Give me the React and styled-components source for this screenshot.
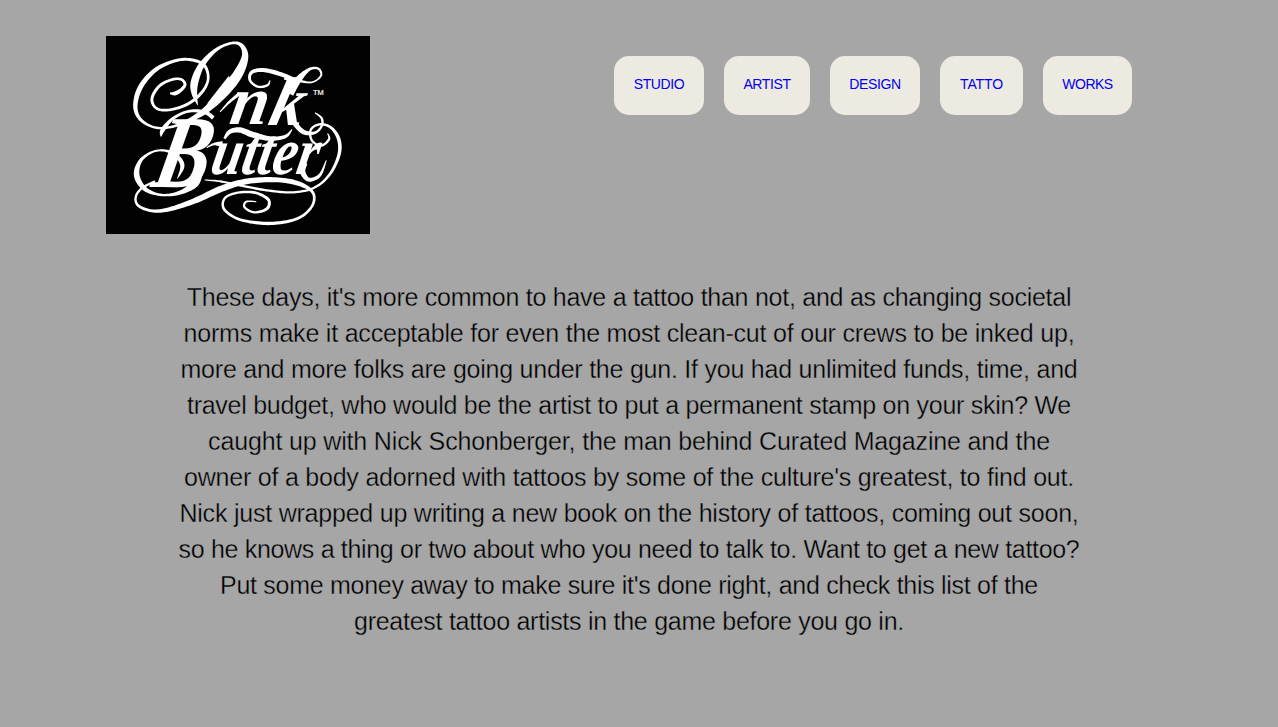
import React from "react";
import styled, { createGlobalStyle } from "styled-components";

const GlobalStyle = createGlobalStyle`
  html, body { margin: 0; padding: 0; background: #a6a6a6; }
  body { font-family: "Liberation Sans", Helvetica, Arial, sans-serif; color: #000; overflow: hidden; }
`;

const Page = styled.div`
  box-sizing: border-box;
  height: 727px;
  padding: 36px 146px 0 106px;
`;

const Header = styled.header`
  display: flex;
  justify-content: space-between;
  align-items: flex-start;
  height: 198px;
`;

const Logo = styled.svg`
  display: block;
  width: 264px;
  height: 198px;
  background: #020202;
`;

const Script = styled.text`
  font-family: "Liberation Serif", "Times New Roman", serif;
  font-style: italic;
  font-weight: 700;
`;

const Stem = styled.text`
  font-family: "Liberation Sans", Arial, sans-serif;
  font-weight: 700;
`;

const Mark = styled.text`
  font-family: "Liberation Sans", Arial, sans-serif;
  font-size: 22px;
  stroke: #fff;
  stroke-width: 0.6px;
`;

const Nav = styled.nav`
  display: flex;
  gap: 20px;
  padding-top: 20px;
`;

const NavLink = styled.a`
  box-sizing: border-box;
  width: ${(p) => p.$width}px;
  height: 59px;
  border-radius: 15px;
  background: #edeae1;
  color: #0000ee;
  font-size: 14px;
  line-height: 57px;
  letter-spacing: ${(p) => p.$track || 0}px;
  text-align: center;
  text-decoration: none;
  white-space: nowrap;
`;

const Intro = styled.p`
  width: 920px;
  margin: 45px 0 0 63px;
  font-size: 25px;
  line-height: 36px;
  text-align: center;
  -webkit-text-stroke: 0.35px #a6a6a6;
`;

const Line = styled.span`
  display: block;
  white-space: nowrap;
  letter-spacing: ${(p) => p.$track}px;
`;

const links = [
  ["STUDIO", 90, -0.4],
  ["ARTIST", 86, -0.4],
  ["DESIGN", 90, -0.4],
  ["TATTO", 83, -0.1],
  ["WORKS", 89, -0.5],
];

const lines = [
  ["These days, it's more common to have a tattoo than not, and as changing societal", -0.26],
  ["norms make it acceptable for even the most clean-cut of our crews to be inked up,", -0.205],
  ["more and more folks are going under the gun. If you had unlimited funds, time, and", -0.23],
  ["travel budget, who would be the artist to put a permanent stamp on your skin? We", -0.27],
  ["caught up with Nick Schonberger, the man behind Curated Magazine and the", -0.16],
  ["owner of a body adorned with tattoos by some of the culture's greatest, to find out.", -0.215],
  ["Nick just wrapped up writing a new book on the history of tattoos, coming out soon,", -0.217],
  ["so he knows a thing or two about who you need to talk to. Want to get a new tattoo?", -0.32],
  ["Put some money away to make sure it's done right, and check this list of the", -0.29],
  ["greatest tattoo artists in the game before you go in.", -0.27],
];

// Each flourish is a list of [x, y, pen width] along the middle of the stroke.
const flourishes = [
  [[210,190,5],[226,190,12],[244,179,10],[255,163,9],[243,148,8],[215,149,8],[178,168,9],[156,205,9],[168,234,8],[205,240,8],[260,224,9],[303,190,9],[324,150,8],[316,110,9],[286,92,9],[235,90,9],[170,117,12],[122,170,15],[106,230,13],[125,272,9],[175,294,7],[240,283,9],[310,246,18],[370,188,30],[414,132,29],[435,80,20],[425,47,12],[397,39,8],[350,58,10],[305,105,18],[284,155,23],[283,190,17],[293,225,2]],
  [[510,151,3],[502,166,7],[473,170,7],[450,151,8],[455,127,10],[490,120,12],[540,132,13],[590,150,9],[635,157,5],[663,137,6],[655,116,7],[628,118,9],[594,150,20],[570,192,22]],
  [[580,276,14],[610,306,14],[645,308,8],[665,288,7],[665,265,7],[645,248,3]],
  [[683,310,3],[687,328,7],[664,347,7],[636,332,7],[632,300,7],[658,283,7],[692,292,8],[716,327,11],[717,374,10],[690,432,8],[645,472,7],[580,487,7],[500,481,7],[420,466,7],[360,454,6],[314,450,3]],
  [[165,454,7],[125,475,7],[107,502,7],[116,528,8],[160,543,9],[215,536,13],[290,510,17],[360,478,19],[435,455,17],[520,449,15],[590,459,14],[636,484,9],[640,520,8],[610,556,8],[560,575,9],[490,580,10],[415,567,8],[372,537,8],[375,504,7],[414,488,7],[465,488,8],[505,509,9],[501,536,9],[463,547,7],[434,532,7],[439,515,6],[469,515,3]],
  [[183,320,3],[188,300,13],[218,266,9],[265,244,8],[313,246,11],[340,264,12]],
  [[306,430,4],[285,462,20],[240,488,12],[185,495,7],[135,477,13],[110,435,17],[124,389,10],[170,362,6],[220,370,9],[247,405,13],[232,446,2]],
  [[373,326,7],[390,305,13],[420,300,16],[461,315,18],[514,326,13],[557,319,10],[576,298,3]],
  [[618,400,9],[608,425,16],[626,449,12],[659,436,9],[679,391,3]],
  [[360,246,3],[386,218,7],[416,193,10]],
  [[320,353,3],[340,343,7],[368,340,14]],
];

// Turns a list of pen positions into the outline of a smooth ribbon.
function ribbon(points) {
  const at = (i) => points[Math.max(0, Math.min(points.length - 1, i))];
  const samples = [];
  for (let i = 0; i < points.length - 1; i++) {
    const [a, b, c, d] = [at(i - 1), at(i), at(i + 1), at(i + 2)];
    for (let s = 0; s < 10; s++) {
      const t = s / 10;
      samples.push([0, 1, 2].map((k) =>
        0.5 * (2 * b[k] + (c[k] - a[k]) * t + (2 * a[k] - 5 * b[k] + 4 * c[k] - d[k]) * t * t + (3 * b[k] - a[k] - 3 * c[k] + d[k]) * t * t * t)
      ));
    }
  }
  samples.push(points[points.length - 1]);
  const left = [];
  const right = [];
  samples.forEach(([x, y, w], i) => {
    const p = samples[Math.max(0, i - 1)];
    const n = samples[Math.min(samples.length - 1, i + 1)];
    const dx = n[0] - p[0];
    const dy = n[1] - p[1];
    const len = Math.hypot(dx, dy) || 1;
    const ox = (-dy / len) * w / 2;
    const oy = (dx / len) * w / 2;
    left.push(`${(x + ox).toFixed(1)},${(y + oy).toFixed(1)}`);
    right.unshift(`${(x - ox).toFixed(1)},${(y - oy).toFixed(1)}`);
  });
  return `M${left.concat(right).join("L")}Z`;
}

function InkButterLogo() {
  return (
    <Logo viewBox="18 18 792 594" role="img" aria-label="Ink Butter">
      <g fill="#fff">
        {flourishes.map((f, i) => <path key={i} d={ribbon(f)} />)}
        <Stem fontSize="150" transform="translate(314 214) rotate(38)">I</Stem>
        <Script fontSize="207" transform="translate(384 282) skewX(-10)" textLength="114" lengthAdjust="spacingAndGlyphs">n</Script>
        <Script fontSize="207" transform="translate(500 284) skewX(-14)" textLength="102" lengthAdjust="spacingAndGlyphs">k</Script>
        <Script fontSize="310" transform="translate(150 470) skewX(-12)" textLength="166" lengthAdjust="spacingAndGlyphs">B</Script>
        <Script fontSize="200" transform="translate(326 432) skewX(-11)" textLength="322" lengthAdjust="spacingAndGlyphs">utter</Script>
        <Mark x="639" y="196" textLength="32" lengthAdjust="spacingAndGlyphs">TM</Mark>
      </g>
    </Logo>
  );
}

export default function App() {
  return (
    <>
      <GlobalStyle />
      <Page>
        <Header>
          <InkButterLogo />
          <Nav>
            {links.map(([label, width, track]) => (
              <NavLink key={label} href="#" $width={width} $track={track}>{label}</NavLink>
            ))}
          </Nav>
        </Header>
        <Intro>
          {lines.map(([text, track]) => <Line key={text} $track={track}>{text}</Line>)}
        </Intro>
      </Page>
    </>
  );
}
